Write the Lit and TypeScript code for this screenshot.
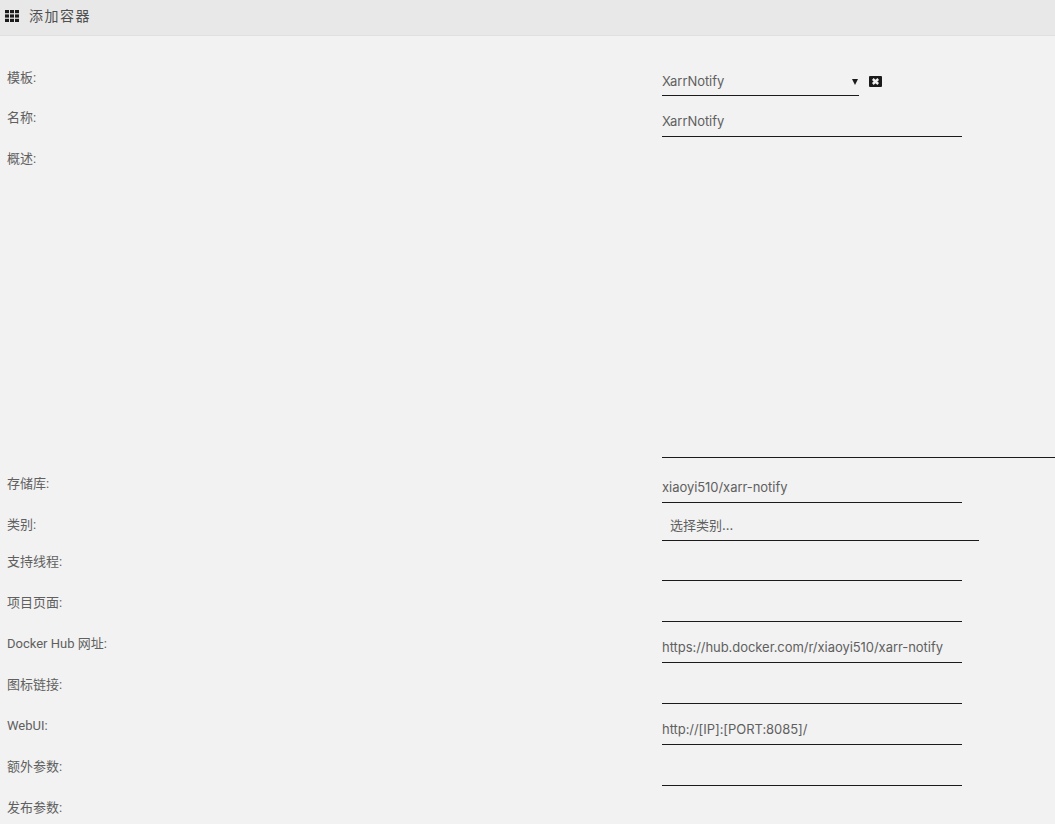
import { LitElement, html, css, svg } from "lit";
import { customElement } from "lit/decorators.js";

interface Row {
  label: string;
  cls: string;
  value?: string;
  kind?: "input" | "select" | "textarea" | "category";
}

const ROWS: Row[] = [
  { label: "模板:", cls: "h40", kind: "select", value: "XarrNotify" },
  { label: "名称:", cls: "h41 low", value: "XarrNotify" },
  { label: "概述:", cls: "h325", kind: "textarea" },
  { label: "存储库:", cls: "h41 low", value: "xiaoyi510/xarr-notify" },
  { label: "类别:", cls: "h37", kind: "category", value: "选择类别..." },
  { label: "支持线程:", cls: "h41 low" },
  { label: "项目页面:", cls: "h41 low" },
  { label: "Docker Hub 网址:", cls: "h41 low", value: "https://hub.docker.com/r/xiaoyi510/xarr-notify" },
  { label: "图标链接:", cls: "h41 low" },
  { label: "WebUI:", cls: "h41 low", value: "http://[IP]:[PORT:8085]/" },
  { label: "额外参数:", cls: "h41 low" },
  { label: "发布参数:", cls: "h41 low" },
];

@customElement("app-root")
export class AppRoot extends LitElement {
  static styles = css`
    :host {
      display: block;
      height: 824px;
      overflow: hidden;
      background: #f2f2f2;
      color: #606060;
      font-family: "Inter", "Noto Sans CJK SC", sans-serif;
      font-size: 13px;
    }
    .head {
      display: flex;
      align-items: center;
      height: 35px;
      padding-left: 5px;
      gap: 10px;
      background: #e8e8e8;
      border-bottom: 1px solid #e0e0e0;
      font-size: 14px;
      letter-spacing: 1.5px;
      color: #505050;
    }
    .head span { line-height: 20px; margin-top: -3px; }
    .head svg { width: 14px; height: 12px; fill: #1c1b1b; display: block; margin-top: -3px; }
    form { display: block; padding-top: 31px; }
    .row {
      display: grid;
      grid-template-columns: 655px 1fr;
      padding-left: 7px;
      align-items: start;
    }
    .h40 { height: 40px; }
    .h41 { height: 41px; }
    .h37 { height: 37px; }
    .h325 { height: 325px; }
    .label { font-family: "Roboto", "Noto Sans CJK SC", sans-serif; line-height: 20px; margin-top: 1px; }
    .field {
      box-sizing: border-box;
      display: block;
      margin: 0;
      padding: 0;
      height: 29px;
      border: 0;
      border-bottom: 1px solid #1c1b1b;
      border-radius: 0;
      outline: 0;
      background: transparent;
      color: inherit;
      font: inherit;
      letter-spacing: -0.05px;
      line-height: 27px;
      width: 300px;
    }
    .low .field { height: 30px; padding-bottom: 2px; }
    .selwrap { display: flex; align-items: flex-start; gap: 10px; }
    .selbox { position: relative; width: 197px; }
    select.field { appearance: none; width: 197px; }
    .arrow {
      position: absolute;
      right: 1px;
      top: 12px;
      width: 0;
      height: 0;
      border-left: 3px solid transparent;
      border-right: 3px solid transparent;
      border-top: 6px solid #1c1b1b;
    }
    .del { width: 13px; height: 11px; margin-top: 9px; display: block; }
    textarea.field { width: 393px; height: 310px; resize: none; }
    .cat {
      box-sizing: border-box;
      width: 317px;
      height: 27px;
      padding-left: 8px;
      border-bottom: 1px solid #1c1b1b;
      line-height: 23px;
    }
  `;

  private grid() {
    const cells = [];
    for (const y of [0, 4.4, 8.8]) {
      for (const x of [0, 5, 10]) {
        cells.push(svg`<rect x=${x} y=${y} width="4" height="3.2"></rect>`);
      }
    }
    return html`<svg viewBox="0 0 14 12" aria-hidden="true">${cells}</svg>`;
  }

  private control(r: Row) {
    switch (r.kind) {
      case "select":
        return html`<div class="selwrap">
          <div class="selbox">
            <select class="field"><option>${r.value}</option></select>
            <span class="arrow"></span>
          </div>
          <svg class="del" viewBox="0 0 13 11" aria-hidden="true">
            <rect width="13" height="11" rx="1" fill="#1c1b1b"></rect>
            <path d="M3.8 3 L9.2 8 M9.2 3 L3.8 8" stroke="#f2f2f2" stroke-width="2.4"></path>
          </svg>
        </div>`;
      case "textarea":
        return html`<textarea class="field"></textarea>`;
      case "category":
        return html`<div class="cat">${r.value}</div>`;
      default:
        return html`<input class="field" type="text" .value=${r.value ?? ""} />`;
    }
  }

  render() {
    return html`
      <div class="head">${this.grid()}<span>添加容器</span></div>
      <form>
        ${ROWS.map(
          (r) => html`<div class="row ${r.cls}">
            <div class="label">${r.label}</div>
            <div>${this.control(r)}</div>
          </div>`
        )}
      </form>
    `;
  }
}
